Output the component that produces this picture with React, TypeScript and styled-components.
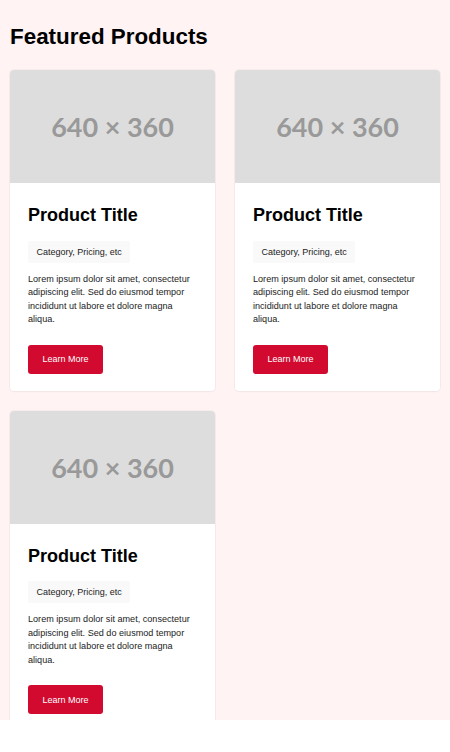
import React from "react";
import styled, { createGlobalStyle } from "styled-components";

const GlobalStyle = createGlobalStyle`
  html, body {
    margin: 0;
    padding: 0;
    background: #ffffff;
  }
  body {
    font-family: "Liberation Sans", Arial, sans-serif;
  }
  * { box-sizing: border-box; }
`;

const Section = styled.section`
  height: 720px;
  background: #fff3f4;
  padding: 0 10px;
  overflow: visible;
`;

const Heading = styled.h2`
  margin: 0;
  padding: 24px 0 21px;
  font-size: 22.4px;
  line-height: 25px;
  font-weight: 700;
  color: #000;
`;

const Grid = styled.div`
  display: grid;
  grid-template-columns: repeat(2, 205px);
  gap: 20px;
`;

const Card = styled.article`
  display: flex;
  flex-direction: column;
  background: #fff;
  border-radius: 4px;
  overflow: hidden;
  box-shadow: 0 0 0 1px rgba(0, 0, 0, 0.03), 0 1px 2px rgba(0, 0, 0, 0.03);
`;

const Placeholder = styled.div`
  height: 113px;
  background: #dddddd;
  display: flex;
  align-items: center;
  justify-content: center;
  color: #999999;
  font-family: Lato, "Liberation Sans", sans-serif;
  font-weight: 700;
  font-size: 27px;
`;

const Body = styled.div`
  display: flex;
  flex-direction: column;
  align-items: flex-start;
  padding: 22px 18px 17px;
`;

const Title = styled.h3`
  margin: 0;
  font-size: 18px;
  line-height: 21.6px;
  font-weight: 700;
  color: #000;
`;

const Tag = styled.span`
  margin-top: 14px;
  display: inline-flex;
  align-items: center;
  height: 22px;
  padding: 0 8.5px;
  background: #f9f9f9;
  border-radius: 2px;
  font-size: 9px;
  color: #222;
`;

const Text = styled.p`
  margin: 10px 0 0;
  font-size: 9.1px;
  line-height: 13.5px;
  color: #222;
`;

const Button = styled.button`
  margin-top: 18px;
  width: 75px;
  height: 29px;
  padding: 0;
  border: none;
  border-radius: 3px;
  background: #d20a30;
  color: #fff;
  font-family: "Liberation Sans", Arial, sans-serif;
  font-size: 9px;
  cursor: pointer;
`;

const products = [1, 2, 3];

export default function App() {
  return (
    <>
      <GlobalStyle />
      <Section>
        <Heading>Featured Products</Heading>
        <Grid>
          {products.map((p) => (
            <Card key={p}>
              <Placeholder>640 × 360</Placeholder>
              <Body>
                <Title>Product Title</Title>
                <Tag>Category, Pricing, etc</Tag>
                <Text>
                  Lorem ipsum dolor sit amet, consectetur adipiscing elit. Sed do
                  eiusmod tempor incididunt ut labore et dolore magna aliqua.
                </Text>
                <Button>Learn More</Button>
              </Body>
            </Card>
          ))}
        </Grid>
      </Section>
    </>
  );
}
